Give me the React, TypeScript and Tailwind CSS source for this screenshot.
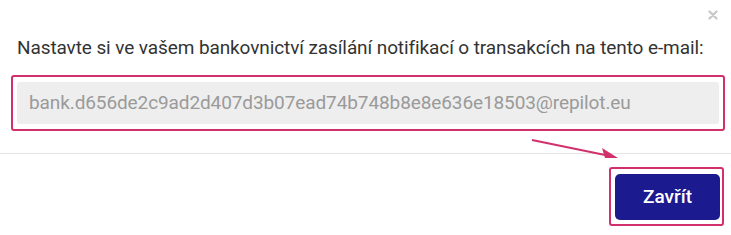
import React from "react";

const PINK = "#d1306d";

export default function App() {
  return (
    <div className="relative w-[731px] h-[235px] bg-white font-['Roboto',sans-serif] overflow-hidden">
      {/* header with close */}
      <div className="flex justify-end h-[30px] pr-[13px] pt-[10px]">
        <button className="w-[10px] h-[10px] flex items-center justify-center">
          <svg width="10" height="10" viewBox="0 0 10 10">
            <path d="M1.5 1.5 L8.5 8.5 M8.5 1.5 L1.5 8.5" stroke="#c9c9c9" strokeWidth="2.4" strokeLinecap="round" />
          </svg>
        </button>
      </div>

      {/* body */}
      <div className="flex flex-col pt-[7px] pb-[22px]">
        <p className="pl-[17px] text-[19px] leading-[22px] text-[#333] tracking-[-0.1px]">
          Nastavte si ve vašem bankovnictví zasílání notifikací o transakcích na tento e-mail:
        </p>
        <div className="ml-[11px] mr-[6px] mt-[16px] border-2 border-[#d1306d] rounded-[3px] px-[4px] py-[5px]">
          <div className="h-[42px] bg-[#eeeeee] rounded-[3px] flex items-center px-[12px] text-[19px] text-[#9a9a9a] tracking-[-0.1px]">
            bank.d656de2c9ad2d407d3b07ead74b748b8e8e636e18503@repilot.eu
          </div>
        </div>
      </div>

      {/* footer */}
      <div className="border-t border-[#e5e5e5] flex justify-end pt-[13px] pr-[7px]">
        <div className="border-2 border-[#d1306d] rounded-[3px] pl-[4px] pr-[2px] pt-[5px] pb-[4px]">
          <button className="w-[105px] h-[46px] bg-[#1b1a8e] rounded-[5px] text-white text-[19px] font-medium">
            Zavřít
          </button>
        </div>
      </div>

      {/* annotation arrow */}
      <svg className="absolute left-0 top-0 pointer-events-none" width="731" height="235">
        <line x1="532" y1="140" x2="610" y2="156" stroke={PINK} strokeWidth="2" />
        <path d="M618 158 L602 148 L605 158 Z" fill={PINK} />
      </svg>
    </div>
  );
}
